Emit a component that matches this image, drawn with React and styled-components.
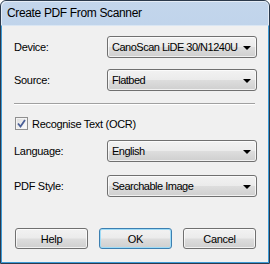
import React from "react";
import styled, { createGlobalStyle } from "styled-components";

const GlobalStyle = createGlobalStyle`
  html, body {
    margin: 0;
    padding: 0;
    background: #ffffff;
  }
  body {
    font-family: "Liberation Sans", Arial, sans-serif;
    font-size: 11px;
    letter-spacing: -0.3px;
    color: #000000;
  }
`;

const Window = styled.div`
  box-sizing: border-box;
  width: 270px;
  height: 264px;
  border: 1px solid #2b3a4c;
  border-radius: 6px 6px 0 0;
  background: linear-gradient(to bottom, #c3d6ec 0%, #b2cae5 60%, #a9c3e1 100%);
  display: flex;
  flex-direction: column;
  overflow: hidden;
`;

const TitleBar = styled.div`
  height: 24px;
  flex: none;
  display: flex;
  align-items: center;
  padding-left: 6px;
  font-size: 12px;
  letter-spacing: -0.35px;
  color: #000000;
  box-shadow: inset 1px 1px 0 rgba(255, 255, 255, 0.55),
    inset -1px 0 0 rgba(255, 255, 255, 0.55);
  border-radius: 5px 5px 0 0;
`;

const Frame = styled.div`
  flex: 1;
  display: flex;
  flex-direction: column;
  border-left: 1px solid #3c9ad6;
  border-right: 1px solid #3c9ad6;
  border-bottom: 1px solid #3c9ad6;
  border-top: 1px solid #dae6f3;
`;

const Client = styled.div`
  flex: 1;
  background: #f0f0f0;
  display: flex;
  flex-direction: column;
  padding: 10px 10px 0 12px;
`;

const Row = styled.div`
  display: flex;
  align-items: center;
  height: ${(p) => p.$h || 22}px;
  margin-top: ${(p) => p.$mt || 0}px;
`;

const Label = styled.div`
  width: 93px;
  flex: none;
`;

const Combo = styled.div`
  box-sizing: border-box;
  width: 150px;
  height: 22px;
  border: 1px solid #707070;
  border-radius: 3px;
  background: linear-gradient(
    to bottom,
    #f2f2f2 0%,
    #ebebeb 48%,
    #dddddd 52%,
    #cfcfcf 100%
  );
  box-shadow: inset 0 0 0 1px rgba(255, 255, 255, 0.7);
  display: flex;
  align-items: center;
  padding: 0 5px 0 4px;
`;

const ComboText = styled.span`
  flex: 1;
  min-width: 0;
  white-space: nowrap;
  letter-spacing: -0.5px;
`;

const Arrow = styled.span`
  flex: none;
  width: 0;
  height: 0;
  border-left: 4px solid transparent;
  border-right: 4px solid transparent;
  border-top: 4px solid #000000;
  margin: 1px 0 0 4px;
`;

const Separator = styled.div`
  height: 1px;
  width: 241px;
  background: #a0a0a0;
  border-bottom: 1px solid #ffffff;
  margin-top: ${(p) => p.$mt || 0}px;
`;

const CheckBox = styled.span`
  box-sizing: border-box;
  width: 13px;
  height: 13px;
  margin: 0 4px 0 1px;
  border: 1px solid #8f8f8f;
  background: linear-gradient(135deg, #dcdcdc 0%, #ffffff 100%);
  box-shadow: inset 0 0 0 1px #f4f4f4;
  display: flex;
  align-items: center;
  justify-content: center;
`;

const ButtonRow = styled.div`
  display: flex;
  gap: 11px;
  margin-top: ${(p) => p.$mt || 0}px;
  padding-left: 1px;
`;

const Button = styled.div`
  box-sizing: border-box;
  width: 73px;
  height: 21px;
  border: 1px solid ${(p) => (p.$default ? "#3c7fb1" : "#707070")};
  border-radius: 3px;
  background: linear-gradient(
    to bottom,
    #f2f2f2 0%,
    #ebebeb 48%,
    #dddddd 52%,
    #cfcfcf 100%
  );
  box-shadow: inset 0 0 0 1px
    ${(p) => (p.$default ? "#9fdcf7" : "rgba(255, 255, 255, 0.7)")};
  display: flex;
  align-items: center;
  justify-content: center;
`;

function Select({ value }) {
  return (
    <Combo>
      <ComboText>{value}</ComboText>
      <Arrow />
    </Combo>
  );
}

export default function App() {
  return (
    <>
      <GlobalStyle />
      <Window>
        <TitleBar>Create PDF From Scanner</TitleBar>
        <Frame>
          <Client>
            <Row>
              <Label>Device:</Label>
              <Select value="CanoScan LiDE 30/N1240U" />
            </Row>
            <Row $mt={11}>
              <Label>Source:</Label>
              <Select value="Flatbed" />
            </Row>
            <Separator $mt={12} />
            <Row $h={15} $mt={11}>
              <CheckBox>
                <svg width="9" height="9" viewBox="0 0 9 9">
                  <path
                    d="M1 4.5 L3.5 7.5 L8 1"
                    fill="none"
                    stroke="#4a5f97"
                    strokeWidth="1.8"
                  />
                </svg>
              </CheckBox>
              <span>Recognise Text (OCR)</span>
            </Row>
            <Row $mt={9}>
              <Label>Language:</Label>
              <Select value="English" />
            </Row>
            <Row $mt={13}>
              <Label>PDF Style:</Label>
              <Select value="Searchable Image" />
            </Row>
            <ButtonRow $mt={31}>
              <Button>Help</Button>
              <Button $default>OK</Button>
              <Button>Cancel</Button>
            </ButtonRow>
          </Client>
        </Frame>
      </Window>
    </>
  );
}
